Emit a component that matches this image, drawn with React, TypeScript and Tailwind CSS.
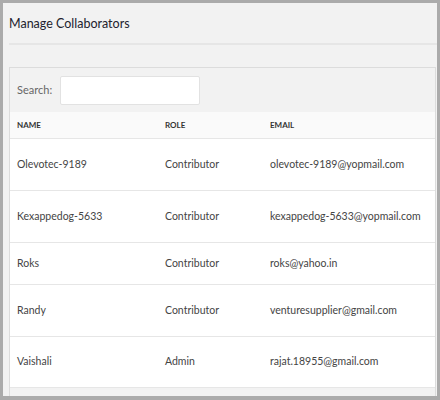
import React from "react";

const rows = [
  { name: "Olevotec-9189", role: "Contributor", email: "olevotec-9189@yopmail.com", h: "h-[52px]" },
  { name: "Kexappedog-5633", role: "Contributor", email: "kexappedog-5633@yopmail.com", h: "h-[52px]" },
  { name: "Roks", role: "Contributor", email: "roks@yahoo.in", h: "h-[42px]" },
  { name: "Randy", role: "Contributor", email: "venturesupplier@gmail.com", h: "h-[52px]" },
  { name: "Vaishali", role: "Admin", email: "rajat.18955@gmail.com", h: "h-[51px]" },
];

export default function App() {
  return (
    <div
      className="w-[440px] h-[400px] bg-[#ababab] pt-[3px] pl-[3px] pr-[3px] pb-[4px] overflow-hidden"
      style={{ fontFamily: 'Lato, "Open Sans", "Liberation Sans", sans-serif' }}
    >
      <div className="h-full bg-[#f2f2f2] pl-[6px] flex flex-col overflow-hidden">
        <div className="h-[40px] pt-[3px] flex items-center text-[12.5px] text-[#22222e] font-normal">
          Manage Collaborators
        </div>
        <div className="h-[2px] bg-[#e6e6e6] shrink-0" />
        <div className="h-[22px] shrink-0" />
        <div className="border border-[#dcdcdc] border-b-0 bg-white flex flex-col grow mr-[1px]">
          <div className="h-[44px] bg-[#f2f2f2] flex items-center pl-[7px] shrink-0">
            <span className="text-[11px] text-[#666] mr-[8px]">Search:</span>
            <div className="w-[140px] h-[29px] bg-white border border-[#e2e2e2] rounded-[2px]" />
          </div>
          <div className="h-[27px] bg-[#fafafa] border-b border-[#e6e6e6] grid grid-cols-[148px_105px_1fr] items-center pl-[7px] text-[8px] font-bold text-[#333] shrink-0">
            <span>NAME</span>
            <span>ROLE</span>
            <span>EMAIL</span>
          </div>
          {rows.map((r) => (
            <div
              key={r.name}
              className={`${r.h} shrink-0 border-b border-[#e6e6e6] grid grid-cols-[148px_105px_1fr] items-center pl-[7px] text-[10.5px] text-[#444] whitespace-nowrap`}
            >
              <span>{r.name}</span>
              <span>{r.role}</span>
              <span>{r.email}</span>
            </div>
          ))}
          <div className="grow bg-[#f2f2f2]" />
        </div>
      </div>
    </div>
  );
}
